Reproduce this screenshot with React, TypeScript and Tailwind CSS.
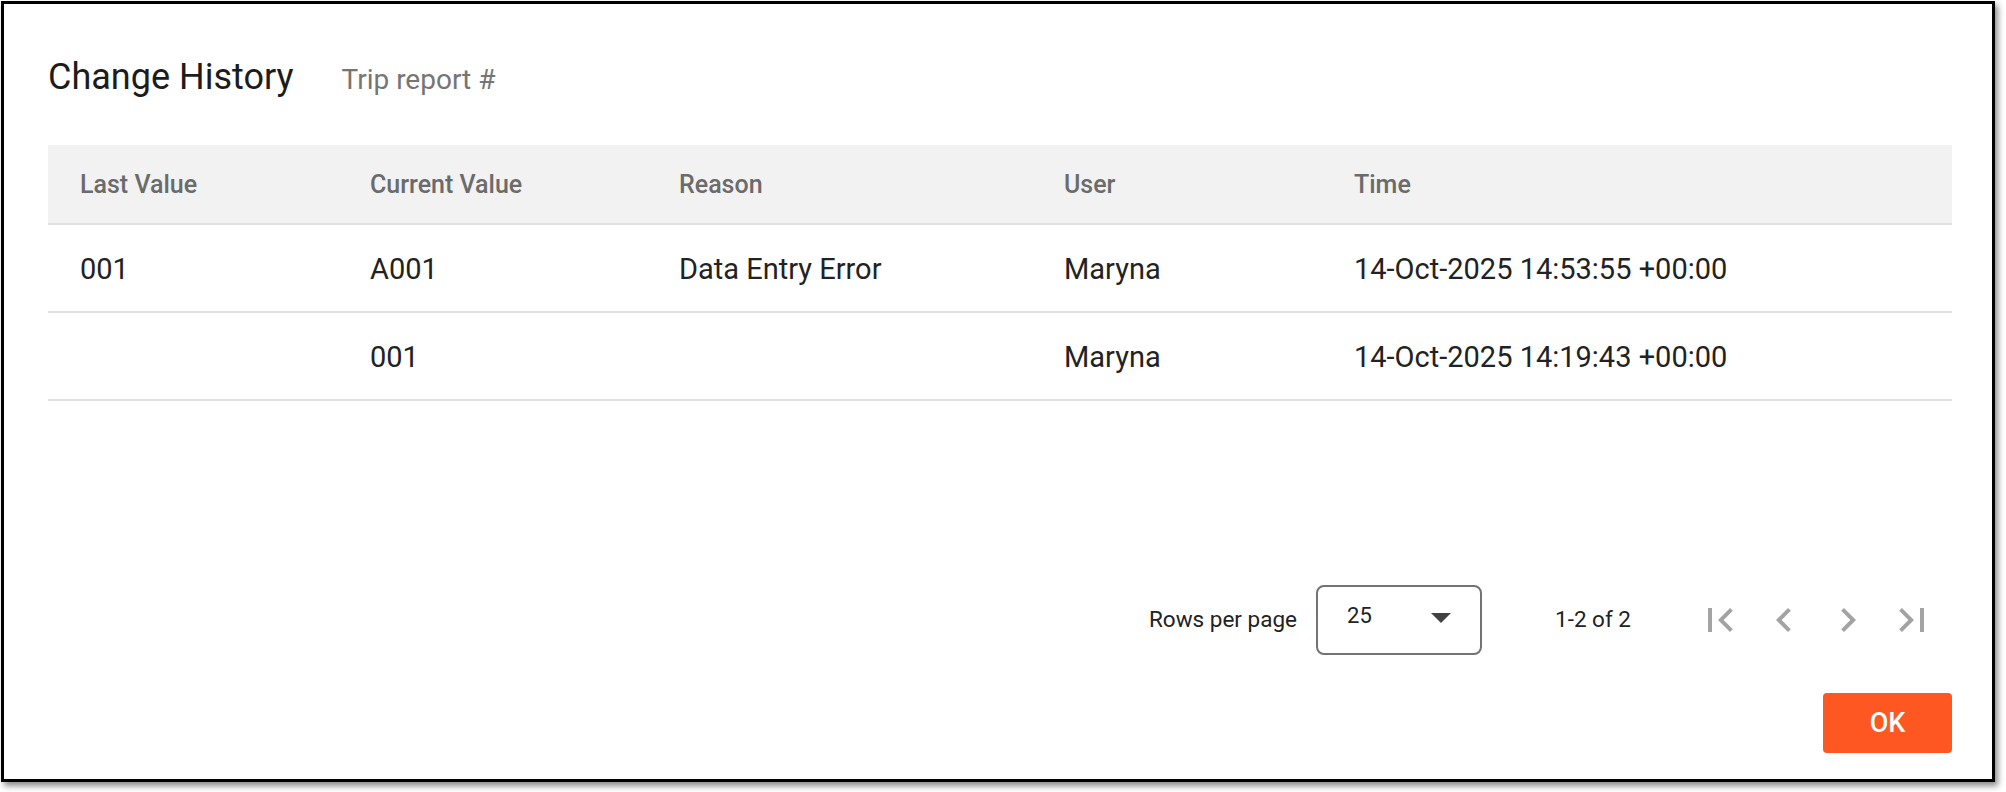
const columns = ["Last Value", "Current Value", "Reason", "User", "Time"];

const rows = [
  ["001", "A001", "Data Entry Error", "Maryna", "14-Oct-2025 14:53:55 +00:00"],
  ["", "001", "", "Maryna", "14-Oct-2025 14:19:43 +00:00"],
];

const PageIcon = ({ d }: { d: string }) => (
  <button className="w-[64px] h-[64px] flex items-center justify-center text-[#a3a3a3]">
    <svg viewBox="0 0 24 24" className="w-[48px] h-[48px]" fill="currentColor">
      <path d={d} />
    </svg>
  </button>
);

const App = () => {
  return (
    <div className="w-[2006px] h-[792px] bg-white pl-px pt-px font-['Roboto',sans-serif]">
      <div className="w-[1994px] h-[781px] border-[3px] border-black bg-white shadow-[3px_4px_6px_rgba(0,0,0,0.45)] flex flex-col pl-[44px] pr-[40px] pt-[51px]">
        {/* TITLE */}
        <div className="flex items-baseline h-[44px]">
          <h2 className="text-[36px] leading-[44px] text-[#1c1c1c]">Change History</h2>
          <span className="ml-[48px] text-[28px] text-[#757575]">Trip report #</span>
        </div>

        {/* TABLE */}
        <div className="mt-[46px]">
          <div className="grid grid-cols-[290px_309px_385px_290px_1fr] h-[80px] pt-[2px] bg-[#f2f2f2] border-b-2 border-[#e0e0e0] items-center">
            {columns.map((c) => (
              <div key={c} className="pl-[32px] text-[25px] font-medium text-[#6b6b6b]">
                {c}
              </div>
            ))}
          </div>
          {rows.map((r, i) => (
            <div
              key={i}
              className="grid grid-cols-[290px_309px_385px_290px_1fr] h-[88px] pt-[4px] border-b-2 border-[#e0e0e0] items-center"
            >
              {r.map((v, j) => (
                <div key={j} className="pl-[32px] text-[29px] text-[#222222]">
                  {v}
                </div>
              ))}
            </div>
          ))}
        </div>

        {/* PAGINATION */}
        <div className="mt-[184px] h-[70px] flex items-center justify-end pr-[8px] text-[22.5px] text-[#222222]">
          <span>Rows per page</span>
          <div className="ml-[19px] w-[166px] h-[70px] border-2 border-[#737373] rounded-[8px] flex items-center pl-[29px]">
            <span className="-mt-[9px] text-[22px]">25</span>
            <svg viewBox="0 0 24 24" className="ml-auto mr-[15px] -mt-[6px] w-[48px] h-[48px]" fill="#424242">
              <path d="M7 10l5 5 5-5z" />
            </svg>
          </div>
          <span className="ml-[73px]">1-2 of 2</span>
          <div className="ml-[57px] flex">
            <PageIcon d="M18.41 16.59L13.82 12l4.59-4.59L17 6l-6 6 6 6zM6 6h2v12H6z" />
            <PageIcon d="M15.41 7.41L14 6l-6 6 6 6 1.41-1.41L10.83 12z" />
            <PageIcon d="M10 6L8.59 7.41 13.17 12l-4.58 4.59L10 18l6-6z" />
            <PageIcon d="M5.59 7.41L10.18 12l-4.59 4.59L7 18l6-6-6-6zM16 6h2v12h-2z" />
          </div>
        </div>

        {/* ACTIONS */}
        <div className="mt-[38px] flex justify-end">
          <button className="w-[129px] h-[60px] bg-[#ff5722] rounded-[4px] text-white text-[27px] font-medium">
            OK
          </button>
        </div>
      </div>
    </div>
  );
};

export default App;
